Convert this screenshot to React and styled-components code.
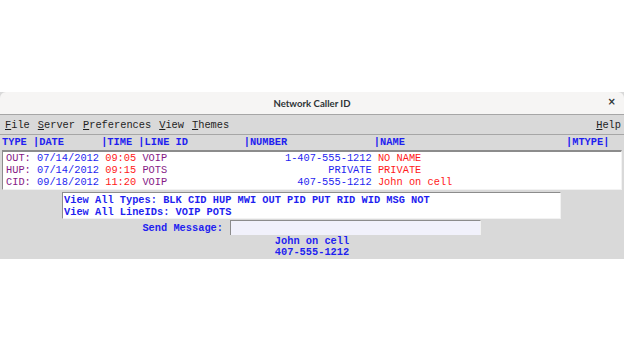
import React from "react";
import styled, { createGlobalStyle } from "styled-components";

const Global = createGlobalStyle`
  html, body { margin: 0; padding: 0; background: #ffffff; }
  #root { width: 100%; }
`;

const MONO = `"Liberation Mono", "Courier New", monospace`;

const Page = styled.div`
  height: 351px;
  display: flex;
  align-items: center;
`;

const Window = styled.div`
  width: 100%;
  display: flex;
  flex-direction: column;
  background: #d9d9d9;
  font-family: ${MONO};
  font-size: 10.33px;
`;

const TitleBar = styled.div`
  height: 22px;
  background: #f6f5f4;
  border-radius: 6px 6px 0 0;
  display: flex;
  align-items: center;
  justify-content: center;
  position: relative;
  font-family: Lato, "Noto Sans", sans-serif;
  font-size: 9.6px;
  font-weight: 700;
  color: #2e3436;
`;

const Close = styled.span`
  position: absolute;
  right: 8px;
  top: 4px;
  font-family: "DejaVu Sans", sans-serif;
  font-size: 10px;
  font-weight: 700;
  color: #2e3436;
`;

const MenuBar = styled.div`
  height: 19px;
  border-top: 1px solid #a6a6a6;
  border-bottom: 1px solid #a6a6a6;
  display: flex;
  align-items: center;
  padding: 0 1px;
  color: #1e1e1e;
`;

const MenuItem = styled.span`
  padding: 0 4px;
  white-space: pre;
  margin-left: ${(p) => (p.$right ? "auto" : "0")};
  margin-right: ${(p) => (p.$right ? "-2px" : "0")};
  & u { text-decoration: underline; text-underline-offset: 1px; }
`;

const Header = styled.div`
  height: 15px;
  line-height: 15px;
  padding-left: 2px;
  white-space: pre;
  font-weight: 700;
  color: #1f1ff0;
`;

const ListBox = styled.div`
  margin: 0 2px;
  height: 36px;
  padding: 0 1px 1px 3px;
  background: #ffffff;
  border-top: 2px solid #8c8c8c;
  border-left: 1px solid #8c8c8c;
  border-right: 1px solid #f2f2f2;
  border-bottom: 1px solid #f2f2f2;
  line-height: 12px;
  white-space: pre;
`;

const Line = styled.div`
  height: 12px;
`;

const C = styled.span`
  color: ${(p) => p.$c};
`;

const TypesBox = styled.div`
  margin: 2px 0 0 62px;
  width: 495px;
  height: 24px;
  padding: 1px 1px 0 1px;
  background: #ffffff;
  border-top: 1px solid #8c8c8c;
  border-left: 1px solid #8c8c8c;
  border-right: 1px solid #f2f2f2;
  border-bottom: 1px solid #f2f2f2;
  line-height: 12px;
  white-space: pre;
  font-weight: 700;
  color: #1f1ff0;
`;

const SendRow = styled.div`
  display: flex;
  align-items: center;
  height: 15px;
  margin-top: 1px;
`;

const SendLabel = styled.span`
  width: 223px;
  text-align: right;
  font-weight: 700;
  color: #1f1ff0;
  white-space: pre;
`;

const SendInput = styled.div`
  margin-left: 7px;
  width: 249px;
  height: 14px;
  background: #f1f1fb;
  border-top: 1px solid #8c8c8c;
  border-left: 1px solid #8c8c8c;
  border-right: 1px solid #f2f2f2;
`;

const Status = styled.div`
  display: flex;
  flex-direction: column;
  align-items: center;
  padding: 1px 0 1px;
  line-height: 11px;
  font-weight: 700;
  color: #1f1ff0;
`;

const header =
  "TYPE |DATE      |TIME |LINE ID         |NUMBER              |NAME                          |MTYPE|";

const rows = [
  ["OUT: ", "07/14/2012 ", "09:05 ", "VOIP", "                   1-407-555-1212", " NO NAME"],
  ["HUP: ", "07/14/2012 ", "09:15 ", "POTS", "                          PRIVATE", " PRIVATE"],
  ["CID: ", "09/18/2012 ", "11:20 ", "VOIP", "                     407-555-1212", " John on cell"],
];

const PURPLE = "#861a86";
const BLUE = "#1f1ff0";
const RED = "#ff1a1a";

export default function App() {
  return (
    <>
      <Global />
      <Page>
        <Window>
          <TitleBar>
            Network Caller ID
            <Close>×</Close>
          </TitleBar>
          <MenuBar>
            <MenuItem><u>F</u>ile</MenuItem>
            <MenuItem><u>S</u>erver</MenuItem>
            <MenuItem><u>P</u>references</MenuItem>
            <MenuItem><u>V</u>iew</MenuItem>
            <MenuItem><u>T</u>hemes</MenuItem>
            <MenuItem $right><u>H</u>elp</MenuItem>
          </MenuBar>
          <Header>{header}</Header>
          <ListBox>
            {rows.map((r, i) => (
              <Line key={i}>
                <C $c={PURPLE}>{r[0]}</C>
                <C $c={BLUE}>{r[1]}</C>
                <C $c={RED}>{r[2]}</C>
                <C $c={PURPLE}>{r[3]}</C>
                <C $c={BLUE}>{r[4]}</C>
                <C $c={RED}>{r[5]}</C>
              </Line>
            ))}
          </ListBox>
          <TypesBox>
            <Line>View All Types: BLK CID HUP MWI OUT PID PUT RID WID MSG NOT</Line>
            <Line>View All LineIDs: VOIP POTS</Line>
          </TypesBox>
          <SendRow>
            <SendLabel>Send Message:</SendLabel>
            <SendInput />
          </SendRow>
          <Status>
            <span>John on cell</span>
            <span>407-555-1212</span>
          </Status>
        </Window>
      </Page>
    </>
  );
}
